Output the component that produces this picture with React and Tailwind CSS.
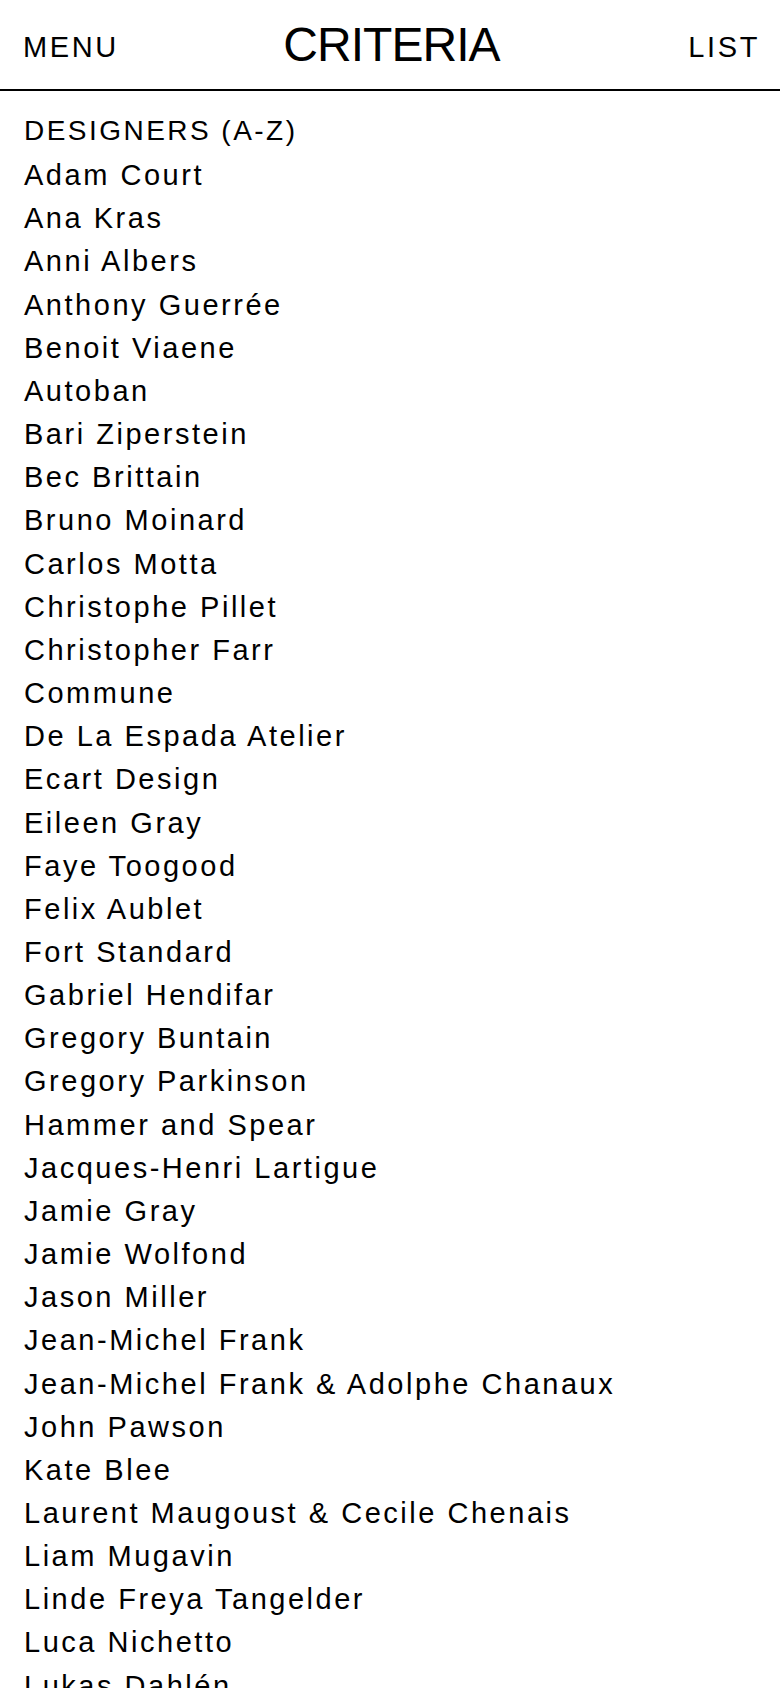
import React from 'react';

const designers = [
  'Adam Court',
  'Ana Kras',
  'Anni Albers',
  'Anthony Guerrée',
  'Benoit Viaene',
  'Autoban',
  'Bari Ziperstein',
  'Bec Brittain',
  'Bruno Moinard',
  'Carlos Motta',
  'Christophe Pillet',
  'Christopher Farr',
  'Commune',
  'De La Espada Atelier',
  'Ecart Design',
  'Eileen Gray',
  'Faye Toogood',
  'Felix Aublet',
  'Fort Standard',
  'Gabriel Hendifar',
  'Gregory Buntain',
  'Gregory Parkinson',
  'Hammer and Spear',
  'Jacques-Henri Lartigue',
  'Jamie Gray',
  'Jamie Wolfond',
  'Jason Miller',
  'Jean-Michel Frank',
  'Jean-Michel Frank & Adolphe Chanaux',
  'John Pawson',
  'Kate Blee',
  'Laurent Maugoust & Cecile Chenais',
  'Liam Mugavin',
  'Linde Freya Tangelder',
  'Luca Nichetto',
  'Lukas Dahlén',
];

export default function App() {
  return (
    <div className="h-[1688px] overflow-hidden bg-white text-black font-['Liberation_Sans',Arial,sans-serif]">
      {/* Header */}
      <header className="grid grid-cols-[1fr_auto_1fr] items-start h-[91px] border-b-2 border-black pl-[23px] pr-[20px]">
        <a href="#" className="justify-self-start mt-[33px] text-[29px] leading-[29px] tracking-[0.09em]">
          MENU
        </a>
        <h1 className="mt-[21px] text-[48px] leading-[48px] tracking-[-0.02em]">CRITERIA</h1>
        <a href="#" className="justify-self-end mt-[33px] text-[29px] leading-[29px] tracking-[0.09em]">
          LIST
        </a>
      </header>

      {/* Designers list */}
      <section className="px-[24px] pt-[18px]">
        <h2 className="text-[28px] leading-[43.15px] tracking-[0.088em] mb-[2px]">DESIGNERS (A-Z)</h2>
        <ul>
          {designers.map((name) => (
            <li key={name} className="text-[29px] leading-[43.15px] tracking-[0.087em]">
              <a href="#">{name}</a>
            </li>
          ))}
        </ul>
      </section>
    </div>
  );
}
